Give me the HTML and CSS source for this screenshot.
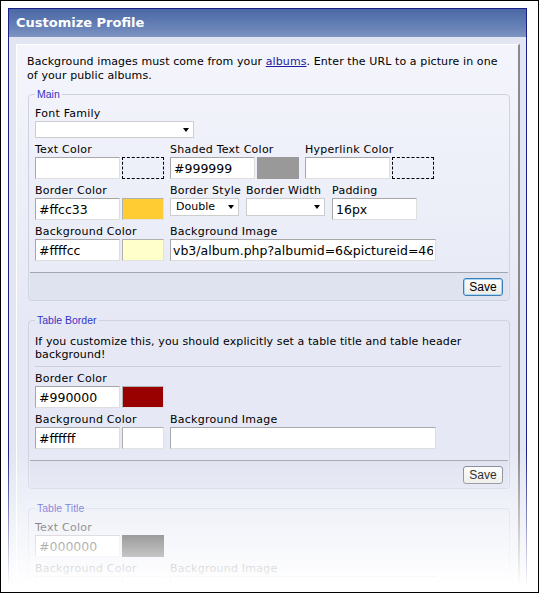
FILE: index.html
```html
<!DOCTYPE html>
<html lang="en">
<head>
    <meta charset="UTF-8">
    <title>Customize Profile</title>
    <link rel="stylesheet" href="styles.css">
</head>
<body>
  <div class="frame">
    <div class="panel">
      <div class="panel-head">Customize Profile</div>
      <div class="panel-body">
        <div class="content">
          <p class="intro">Background images must come from your <a href="#">albums</a>. Enter the URL to a picture in one of your public albums.</p>

          <!-- Main -->
          <fieldset class="group">
            <legend>Main</legend>
            <div class="group-body">
              <div class="row">
                <div class="field">
                  <label>Font Family</label>
                  <div class="select select-font"><span class="arrow"></span></div>
                </div>
              </div>
              <div class="row">
                <div class="field">
                  <label>Text Color</label>
                  <div class="pick"><input class="text" value=""><span class="swatch empty"></span></div>
                </div>
                <div class="field">
                  <label>Shaded Text Color</label>
                  <div class="pick"><input class="text" value="#999999"><span class="swatch flat" style="background:#999999"></span></div>
                </div>
                <div class="field">
                  <label>Hyperlink Color</label>
                  <div class="pick"><input class="text" value=""><span class="swatch empty"></span></div>
                </div>
              </div>
              <div class="row">
                <div class="field">
                  <label>Border Color</label>
                  <div class="pick"><input class="text" value="#ffcc33"><span class="swatch" style="background:#ffcc33"></span></div>
                </div>
                <div class="field field-style">
                  <label>Border Style</label>
                  <div class="select select-style">Double<span class="arrow"></span></div>
                </div>
                <div class="field field-width">
                  <label>Border Width</label>
                  <div class="select select-width"><span class="arrow"></span></div>
                </div>
                <div class="field">
                  <label>Padding</label>
                  <input class="text" value="16px">
                </div>
              </div>
              <div class="row">
                <div class="field">
                  <label>Background Color</label>
                  <div class="pick"><input class="text" value="#ffffcc"><span class="swatch" style="background:#ffffcc"></span></div>
                </div>
                <div class="field">
                  <label>Background Image</label>
                  <input class="text text-long" value="vb3/album.php?albumid=6&amp;pictureid=46">
                </div>
              </div>
            </div>
            <div class="group-foot"><button class="btn btn-default">Save</button></div>
          </fieldset>

          <!-- Table Border -->
          <fieldset class="group">
            <legend>Table Border</legend>
            <div class="group-body">
              <p class="note">If you customize this, you should explicitly set a table title and table header background!</p>
              <hr class="rule">
              <div class="row">
                <div class="field">
                  <label>Border Color</label>
                  <div class="pick"><input class="text" value="#990000"><span class="swatch" style="background:#990000"></span></div>
                </div>
              </div>
              <div class="row">
                <div class="field">
                  <label>Background Color</label>
                  <div class="pick"><input class="text" value="#ffffff"><span class="swatch" style="background:#ffffff"></span></div>
                </div>
                <div class="field">
                  <label>Background Image</label>
                  <input class="text text-long" value="">
                </div>
              </div>
            </div>
            <div class="group-foot"><button class="btn">Save</button></div>
          </fieldset>

          <!-- Table Title -->
          <fieldset class="group">
            <legend>Table Title</legend>
            <div class="group-body">
              <div class="row">
                <div class="field">
                  <label>Text Color</label>
                  <div class="pick"><input class="text" value="#000000"><span class="swatch flat" style="background:#000000"></span></div>
                </div>
              </div>
              <div class="row">
                <div class="field">
                  <label>Background Color</label>
                  <div class="pick"><input class="text" value=""><span class="swatch" style="background:#ffffff"></span></div>
                </div>
                <div class="field">
                  <label>Background Image</label>
                  <input class="text text-long" value="">
                </div>
              </div>
            </div>
          </fieldset>
        </div>
      </div>
    </div>
    <div class="fade"></div>
  </div>
</body>
</html>
```

FILE: styles.css
```css
body {
    margin: 0;
    font-family: "DejaVu Sans", Verdana, sans-serif;
    font-size: 11px;
    letter-spacing: 0.25px;
    color: #000;
    background: #fff;
}

.frame {
    position: relative;
    width: 539px;
    height: 593px;
    box-sizing: border-box;
    border: 1px solid #000;
    background: #fff;
    padding: 7px 0 0 7px;
    overflow: hidden;
}

.panel {
    width: 517px;
    border: 1px solid #1b1f87;
}

.panel-head {
    height: 28px;
    line-height: 28px;
    padding-left: 7px;
    color: #fff;
    font-size: 13px;
    font-weight: bold;
    letter-spacing: 0;
    background: linear-gradient(#4a68a5, #6a84b8 70%, #8095c3);
}

.panel-body {
    background: #e2e6f2;
    padding: 7px 6px 0 7px;
}

.content {
    border-top: 1px solid #fff;
    border-left: 1px solid #fff;
    border-right: 2px solid #8a8a8a;
    background: linear-gradient(#f4f5fc, #e6e9f5 280px);
    padding: 10px 8px 40px 10px;
}

.intro {
    margin: 0 0 5px;
    line-height: 14px;
    letter-spacing: 0.1px;
}

.intro a {
    color: #1c1c9c;
}

/* fieldset groups */
.group {
    margin: 0 0 13px 1px;
    padding: 0;
    min-width: 0;
    border: 1px solid #cfd3df;
    border-radius: 4px;
}

.group legend {
    margin-left: 6px;
    padding: 0 2px;
    font-family: "Liberation Sans", Arial, sans-serif;
    font-size: 10.5px;
    line-height: 13px;
    letter-spacing: 0;
    color: #3434c4;
}

.group-body {
    padding: 1px 7px 11px 6px;
}

.group-foot {
    margin: 0 1px;
    border-top: 1px solid #a3a6ae;
    background: #dfe3f0;
    padding: 5px 5px 4px;
    text-align: right;
}

.note {
    margin: 7px 0 0;
    line-height: 13px;
    letter-spacing: 0.1px;
}

.rule {
    border: 0;
    border-top: 1px solid #c9cdd9;
    margin: 5px 1px 2px 0;
}

.row {
    display: flex;
    gap: 6px;
    margin-top: 5px;
}

.field label {
    display: block;
    line-height: 14px;
    white-space: nowrap;
}

.field-style { width: 70px; }
.field-width { width: 80px; }

.pick {
    display: flex;
    gap: 2px;
}

.text {
    display: block;
    box-sizing: border-box;
    width: 85px;
    height: 22px;
    margin: 0;
    padding: 0 3px;
    border: 1px solid;
    border-color: #a7a7a7 #dedede #dedede #a7a7a7;
    background: #fff;
    font: 12.5px "DejaVu Sans", Verdana, sans-serif;
    letter-spacing: 0;
    color: #000;
    outline: none;
}

.text-long {
    width: 266px;
    padding: 0 2px;
}

.swatch {
    display: block;
    box-sizing: border-box;
    width: 42px;
    height: 22px;
    border: 1px solid;
    border-color: #b0b0b0 #e2e2e2 #e2e2e2 #b0b0b0;
}

.swatch.flat {
    border-color: transparent;
}

.swatch.empty {
    border: 1px dashed #000;
}

.select {
    position: relative;
    box-sizing: border-box;
    height: 18px;
    border: 1px solid #cdcdcd;
    background: #fff;
    line-height: 16px;
    padding-left: 5px;
    letter-spacing: 0;
}

.select-font { width: 159px; height: 17px; }
.select-style { width: 69px; }
.select-width { width: 79px; }

.arrow {
    position: absolute;
    right: 4px;
    top: 6px;
    border-left: 3px solid transparent;
    border-right: 3px solid transparent;
    border-top: 4px solid #000;
}

.btn {
    width: 40px;
    height: 18px;
    padding: 0;
    border: 1px solid #7b8191;
    border-radius: 3px;
    background: linear-gradient(#fefefe, #ecebe6);
    font: 12px "Liberation Sans", Arial, sans-serif;
    color: #000;
}

.btn-default {
    border-color: #3d7db5;
    box-shadow: inset 0 0 0 1px #a9d6f5;
}

/* white fade over the bottom of the panel */
.fade {
    position: absolute;
    left: 0;
    right: 0;
    bottom: 0;
    height: 141px;
    background: linear-gradient(rgba(255, 255, 255, 0), rgba(255, 255, 255, 0.45) 45%, #fff 96%);
}
```
